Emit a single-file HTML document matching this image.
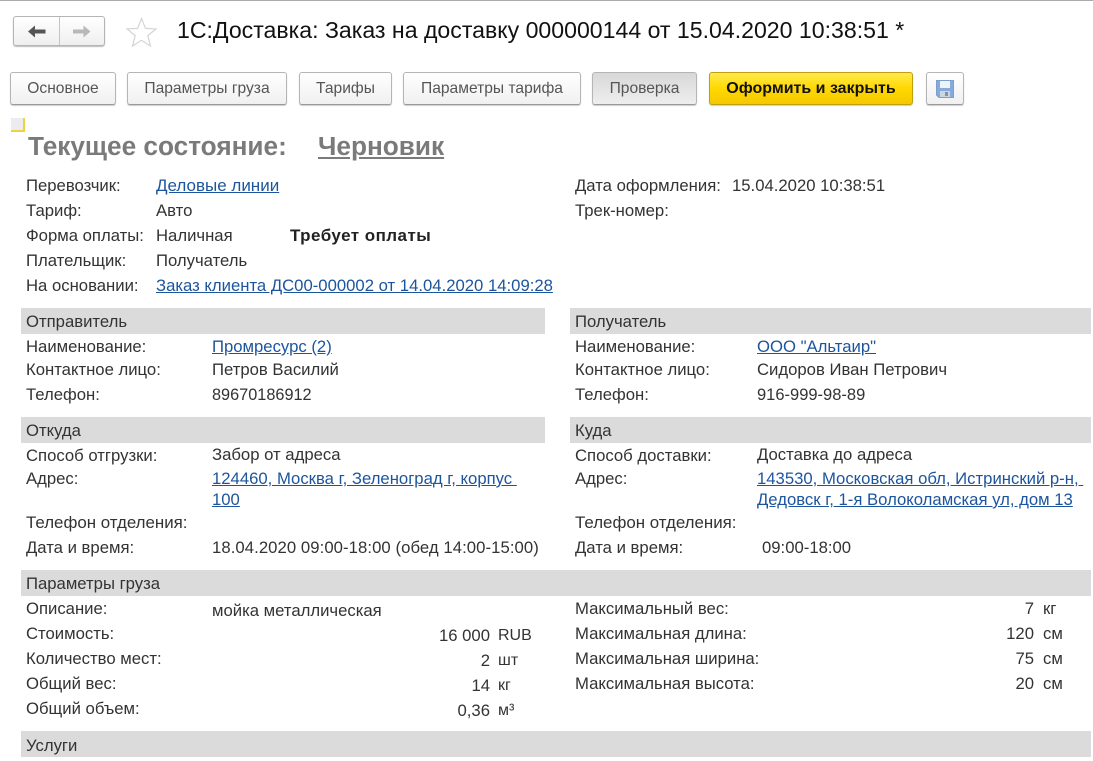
<!DOCTYPE html>
<html lang="ru"><head><meta charset="utf-8"><title>1С:Доставка</title>
<style>
html,body{margin:0;padding:0;background:#fff}
body{position:relative;width:1093px;height:759px;overflow:hidden;font-family:"Liberation Sans",sans-serif;font-size:16.7px;color:#333}
.t{position:absolute;white-space:nowrap;line-height:20px;height:20px;margin-top:1px}
.r{text-align:right}
a{color:#1c559e;text-decoration:underline}
.bar{position:absolute;height:26px;background:#dbdbdb;line-height:28px;padding-left:5px;box-sizing:border-box;color:#333;white-space:nowrap}
.btn{position:absolute;top:72px;height:33px;box-sizing:border-box;border:1px solid #b5b5b5;border-bottom-color:#999;border-radius:3px;background:linear-gradient(#fff,#f0f0f0);text-align:center;line-height:31px;font-size:15.6px;color:#555;box-shadow:0 1px 1px #ccc;white-space:nowrap}
</style></head><body>
<div style="position:absolute;left:0;top:0;width:1093px;height:1px;background:#aaa"></div>
<div style="position:absolute;left:13px;top:16px;width:92px;height:30px;box-sizing:border-box;border:1px solid #b5b5b5;border-radius:3px;background:linear-gradient(#fff,#efefef);box-shadow:0 1px 1px #bbb"></div>
<div style="position:absolute;left:59px;top:17px;width:1px;height:28px;background:#c4c4c4"></div>
<svg style="position:absolute;left:0;top:0" width="170" height="50"><path d="M28 31.500L35 25.500V29.500H45.500V33.500H35V37.500Z" fill="#555"/><path d="M90.500 31.500L83.500 25.500V29.500H73V33.500H83.500V37.500Z" fill="#b8b8b8"/><path d="M141.500 18.500L145.400 28.300L156 29L147.800 35.600L150.500 46L141.500 40.300L132.500 46L135.200 35.600L127 29L137.600 28.300Z" fill="#fff" stroke="#d4d4d4" stroke-width="1.200"/></svg>
<div class="t" style="left:177px;top:15px;height:28px;line-height:28px;font-size:23.1px;color:#111">1С:Доставка: Заказ на доставку 000000144 от 15.04.2020 10:38:51 *</div>
<div class="btn" style="left:10px;width:106px">Основное</div>
<div class="btn" style="left:127px;width:160px">Параметры груза</div>
<div class="btn" style="left:299px;width:93px">Тарифы</div>
<div class="btn" style="left:403px;width:178px">Параметры тарифа</div>
<div class="btn" style="left:592px;width:105px;background:linear-gradient(#d8d8d8,#eee);color:#555">Проверка</div>
<div class="btn" style="left:709px;width:204px;background:linear-gradient(#ffe94d,#ffd800 50%,#f5c800);border-color:#c0a010;color:#111;font-weight:bold;font-size:16px">Оформить и закрыть</div>
<div class="btn" style="left:926px;width:38px"></div>
<svg style="position:absolute;left:936px;top:80px" width="18" height="18"><path d="M0.500 0.500H17.500V17.500H3L0.500 15Z" fill="#84abdb" stroke="#7a9fcc"/><rect x="4" y="1" width="10" height="7" fill="#eef3f8"/><rect x="4" y="11" width="10" height="6" fill="#cfd5dc"/><rect x="9" y="12" width="3" height="4" fill="#7f92aa"/></svg>
<div style="position:absolute;left:11px;top:118px;width:14px;height:14px;box-sizing:border-box;background:#ececf0;border-right:2px solid #ecd43c;border-bottom:2px solid #ecd43c"></div>
<div class="t" style="left:28px;top:130px;height:30px;line-height:30px;font-size:26.2px;font-weight:bold;color:#7a7a7a">Текущее состояние:</div>
<div class="t" style="left:318px;top:130px;height:30px;line-height:30px;font-size:26.2px;font-weight:bold;color:#7a7a7a;text-decoration:underline">Черновик</div>

<div class="t" style="left:26px;top:175px">Перевозчик:</div><div class="t" style="left:156px;top:175px;font-size:17px"><a>Деловые линии</a></div>
<div class="t" style="left:26px;top:200px">Тариф:</div><div class="t" style="left:156px;top:200px">Авто</div>
<div class="t" style="left:26px;top:225px">Форма оплаты:</div><div class="t" style="left:156px;top:225px">Наличная</div><div class="t" style="left:290px;top:225px;font-weight:bold;font-size:17px;letter-spacing:.45px;color:#222">Требует оплаты</div>
<div class="t" style="left:26px;top:250px">Плательщик:</div><div class="t" style="left:156px;top:250px">Получатель</div>
<div class="t" style="left:26px;top:275px">На основании:</div><div class="t" style="left:156px;top:275px"><a>Заказ клиента ДС00-000002 от 14.04.2020 14:09:28</a></div>
<div class="t" style="left:575px;top:175px">Дата оформления:</div><div class="t" style="left:732px;top:175px">15.04.2020 10:38:51</div>
<div class="t" style="left:575px;top:200px">Трек-номер:</div>

<div class="bar" style="left:21px;top:308px;width:524px">Отправитель</div>
<div class="bar" style="left:570px;top:308px;width:521px">Получатель</div>
<div class="t" style="left:26px;top:336px">Наименование:</div><div class="t" style="left:212px;top:336px"><a>Промресурс (2)</a></div>
<div class="t" style="left:26px;top:359px">Контактное лицо:</div><div class="t" style="left:212px;top:359px">Петров Василий</div>
<div class="t" style="left:26px;top:384px">Телефон:</div><div class="t" style="left:212px;top:384px;font-size:16.3px">89670186912</div>
<div class="t" style="left:575px;top:336px">Наименование:</div><div class="t" style="left:757px;top:336px"><a>ООО "Альтаир"</a></div>
<div class="t" style="left:575px;top:359px">Контактное лицо:</div><div class="t" style="left:757px;top:359px">Сидоров Иван Петрович</div>
<div class="t" style="left:575px;top:384px">Телефон:</div><div class="t" style="left:757px;top:384px;font-size:16.5px">916-999-98-89</div>

<div class="bar" style="left:21px;top:417px;width:524px">Откуда</div>
<div class="bar" style="left:570px;top:417px;width:521px">Куда</div>
<div class="t" style="left:26px;top:445px">Способ отгрузки:</div><div class="t" style="left:212px;top:444px">Забор от адреса</div>
<div class="t" style="left:26px;top:468px">Адрес:</div><div class="t" style="left:212px;top:468px"><a>124460, Москва г, Зеленоград г, корпус&nbsp;</a></div><div class="t" style="left:212px;top:489px"><a>100</a></div>
<div class="t" style="left:26px;top:512px;font-size:16.9px">Телефон отделения:</div>
<div class="t" style="left:26px;top:537px">Дата и время:</div><div class="t" style="left:212px;top:537px;letter-spacing:.07px">18.04.2020 09:00-18:00 (обед 14:00-15:00)</div>
<div class="t" style="left:575px;top:445px">Способ доставки:</div><div class="t" style="left:757px;top:444px">Доставка до адреса</div>
<div class="t" style="left:575px;top:468px">Адрес:</div><div class="t" style="left:757px;top:468px"><a>143530, Московская обл, Истринский р-н,&nbsp;</a></div><div class="t" style="left:757px;top:489px"><a>Дедовск г, 1-я Волоколамская ул, дом 13</a></div>
<div class="t" style="left:575px;top:512px;font-size:16.9px">Телефон отделения:</div>
<div class="t" style="left:575px;top:537px">Дата и время:</div><div class="t" style="left:762px;top:537px">09:00-18:00</div>

<div class="bar" style="left:21px;top:570px;width:1070px">Параметры груза</div>
<div class="t" style="left:26px;top:598px">Описание:</div><div class="t" style="left:212px;top:600px">мойка металлическая</div>
<div class="t" style="left:26px;top:623px">Стоимость:</div><div class="t r" style="left:390px;width:100px;top:625px">16 000</div><div class="t" style="left:498px;top:625px;font-size:16px">RUB</div>
<div class="t" style="left:26px;top:648px">Количество мест:</div><div class="t r" style="left:390px;width:100px;top:650px">2</div><div class="t" style="left:498px;top:650px;font-size:16px">шт</div>
<div class="t" style="left:26px;top:673px">Общий вес:</div><div class="t r" style="left:390px;width:100px;top:675px">14</div><div class="t" style="left:498px;top:675px;font-size:16px">кг</div>
<div class="t" style="left:26px;top:698px">Общий объем:</div><div class="t r" style="left:390px;width:100px;top:700px">0,36</div><div class="t" style="left:498px;top:700px;font-size:16px">м³</div>
<div class="t" style="left:575px;top:598px">Максимальный вес:</div><div class="t r" style="left:934px;width:100px;top:598px">7</div><div class="t" style="left:1043px;top:598px;font-size:16.7px">кг</div>
<div class="t" style="left:575px;top:623px">Максимальная длина:</div><div class="t r" style="left:934px;width:100px;top:623px">120</div><div class="t" style="left:1043px;top:623px;font-size:16.7px">см</div>
<div class="t" style="left:575px;top:648px">Максимальная ширина:</div><div class="t r" style="left:934px;width:100px;top:648px">75</div><div class="t" style="left:1043px;top:648px;font-size:16.7px">см</div>
<div class="t" style="left:575px;top:673px">Максимальная высота:</div><div class="t r" style="left:934px;width:100px;top:673px">20</div><div class="t" style="left:1043px;top:673px;font-size:16.7px">см</div>

<div class="bar" style="left:21px;top:731px;width:1070px;line-height:30px">Услуги</div>
</body></html>
